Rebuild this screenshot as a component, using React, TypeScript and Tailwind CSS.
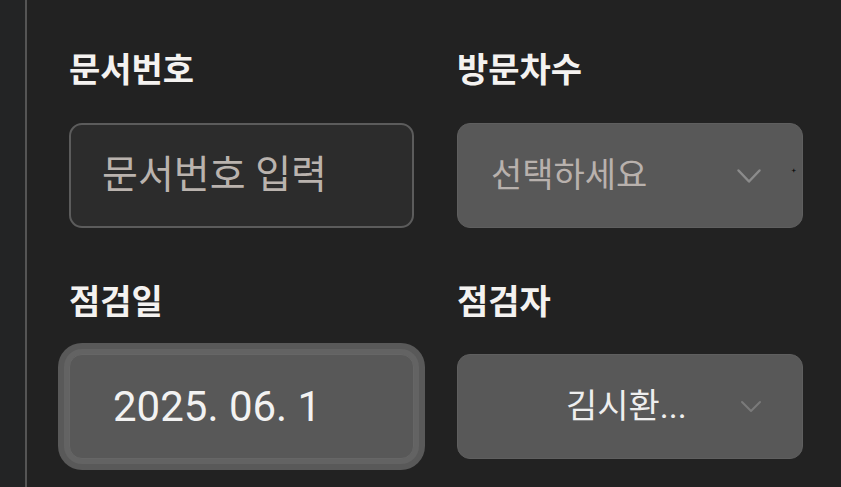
import React from "react";

const font = { fontFamily: 'Roboto, "Noto Sans CJK KR", sans-serif' };

const Chevron = ({ w, h, color, sw }: { w: number; h: number; color: string; sw: number }) => (
  <svg width={w} height={h} viewBox={`0 0 ${w} ${h}`} fill="none">
    <polyline
      points={`${sw},${sw} ${w / 2},${h - sw} ${w - sw},${sw}`}
      stroke={color}
      strokeWidth={sw}
      strokeLinecap="round"
      strokeLinejoin="round"
    />
  </svg>
);

const Label = ({ children }: { children: React.ReactNode }) => (
  <div className="h-[34px] text-[34px] leading-[34px] font-bold text-[#f4f2f0]">{children}</div>
);

export default function App() {
  return (
    <div className="flex w-[841px] h-[487px] overflow-hidden bg-[#222222]" style={font}>
      <div className="w-[27px] shrink-0 bg-[#232425] border-r-2 border-[#555555]" />
      <div className="flex-1 pl-[42px] pr-[38px] pt-[53px]">
        <div className="grid grid-cols-[345px_346px] gap-x-[43px]">
          {/* row 1 */}
          <div>
            <Label>문서번호</Label>
            <div className="mt-[36px] h-[105px] rounded-[13px] border-2 border-[#5c5c5c] bg-[#2c2c2c] flex items-center pl-[31px]">
              <span className="text-[39px] text-[#bab3ae]">문서번호 입력</span>
            </div>
          </div>
          <div>
            <Label>방문차수</Label>
            <div className="relative mt-[36px] h-[105px] rounded-[13px] border border-[#5f5f5f] bg-[#585858] flex items-center justify-between pl-[33px] pr-[40px]">
              <span className="text-[34px] text-[#b8b1ad]">선택하세요</span>
              <Chevron w={26} h={16} color="#8b8b8b" sw={2.5} />
              <span className="absolute right-[6px] top-[43px] text-[8px] leading-none text-black">+</span>
            </div>
          </div>

          {/* row 2 */}
          <div className="mt-[57px]">
            <Label>점검일</Label>
            <div className="mt-[35px] h-[105px] rounded-[13px] border border-[#666666] bg-[#585858] shadow-[0_0_0_5px_#636363,0_0_0_11px_#595959] flex items-center pl-[43px] overflow-hidden">
              <span className="text-[42px] text-[#f2f2f2] whitespace-nowrap" style={{ fontFamily: "Roboto, sans-serif" }}>
                2025. 06. 1
              </span>
            </div>
          </div>
          <div className="mt-[57px]">
            <Label>점검자</Label>
            <div className="mt-[35px] h-[105px] rounded-[13px] border border-[#5f5f5f] bg-[#585858] flex items-center pl-[108px] pr-[40px]">
              <span className="flex-1 text-[34px] text-[#eeeeee]">김시환...</span>
              <Chevron w={22} h={13} color="#7a7a7a" sw={2} />
            </div>
          </div>
        </div>
      </div>
    </div>
  );
}
